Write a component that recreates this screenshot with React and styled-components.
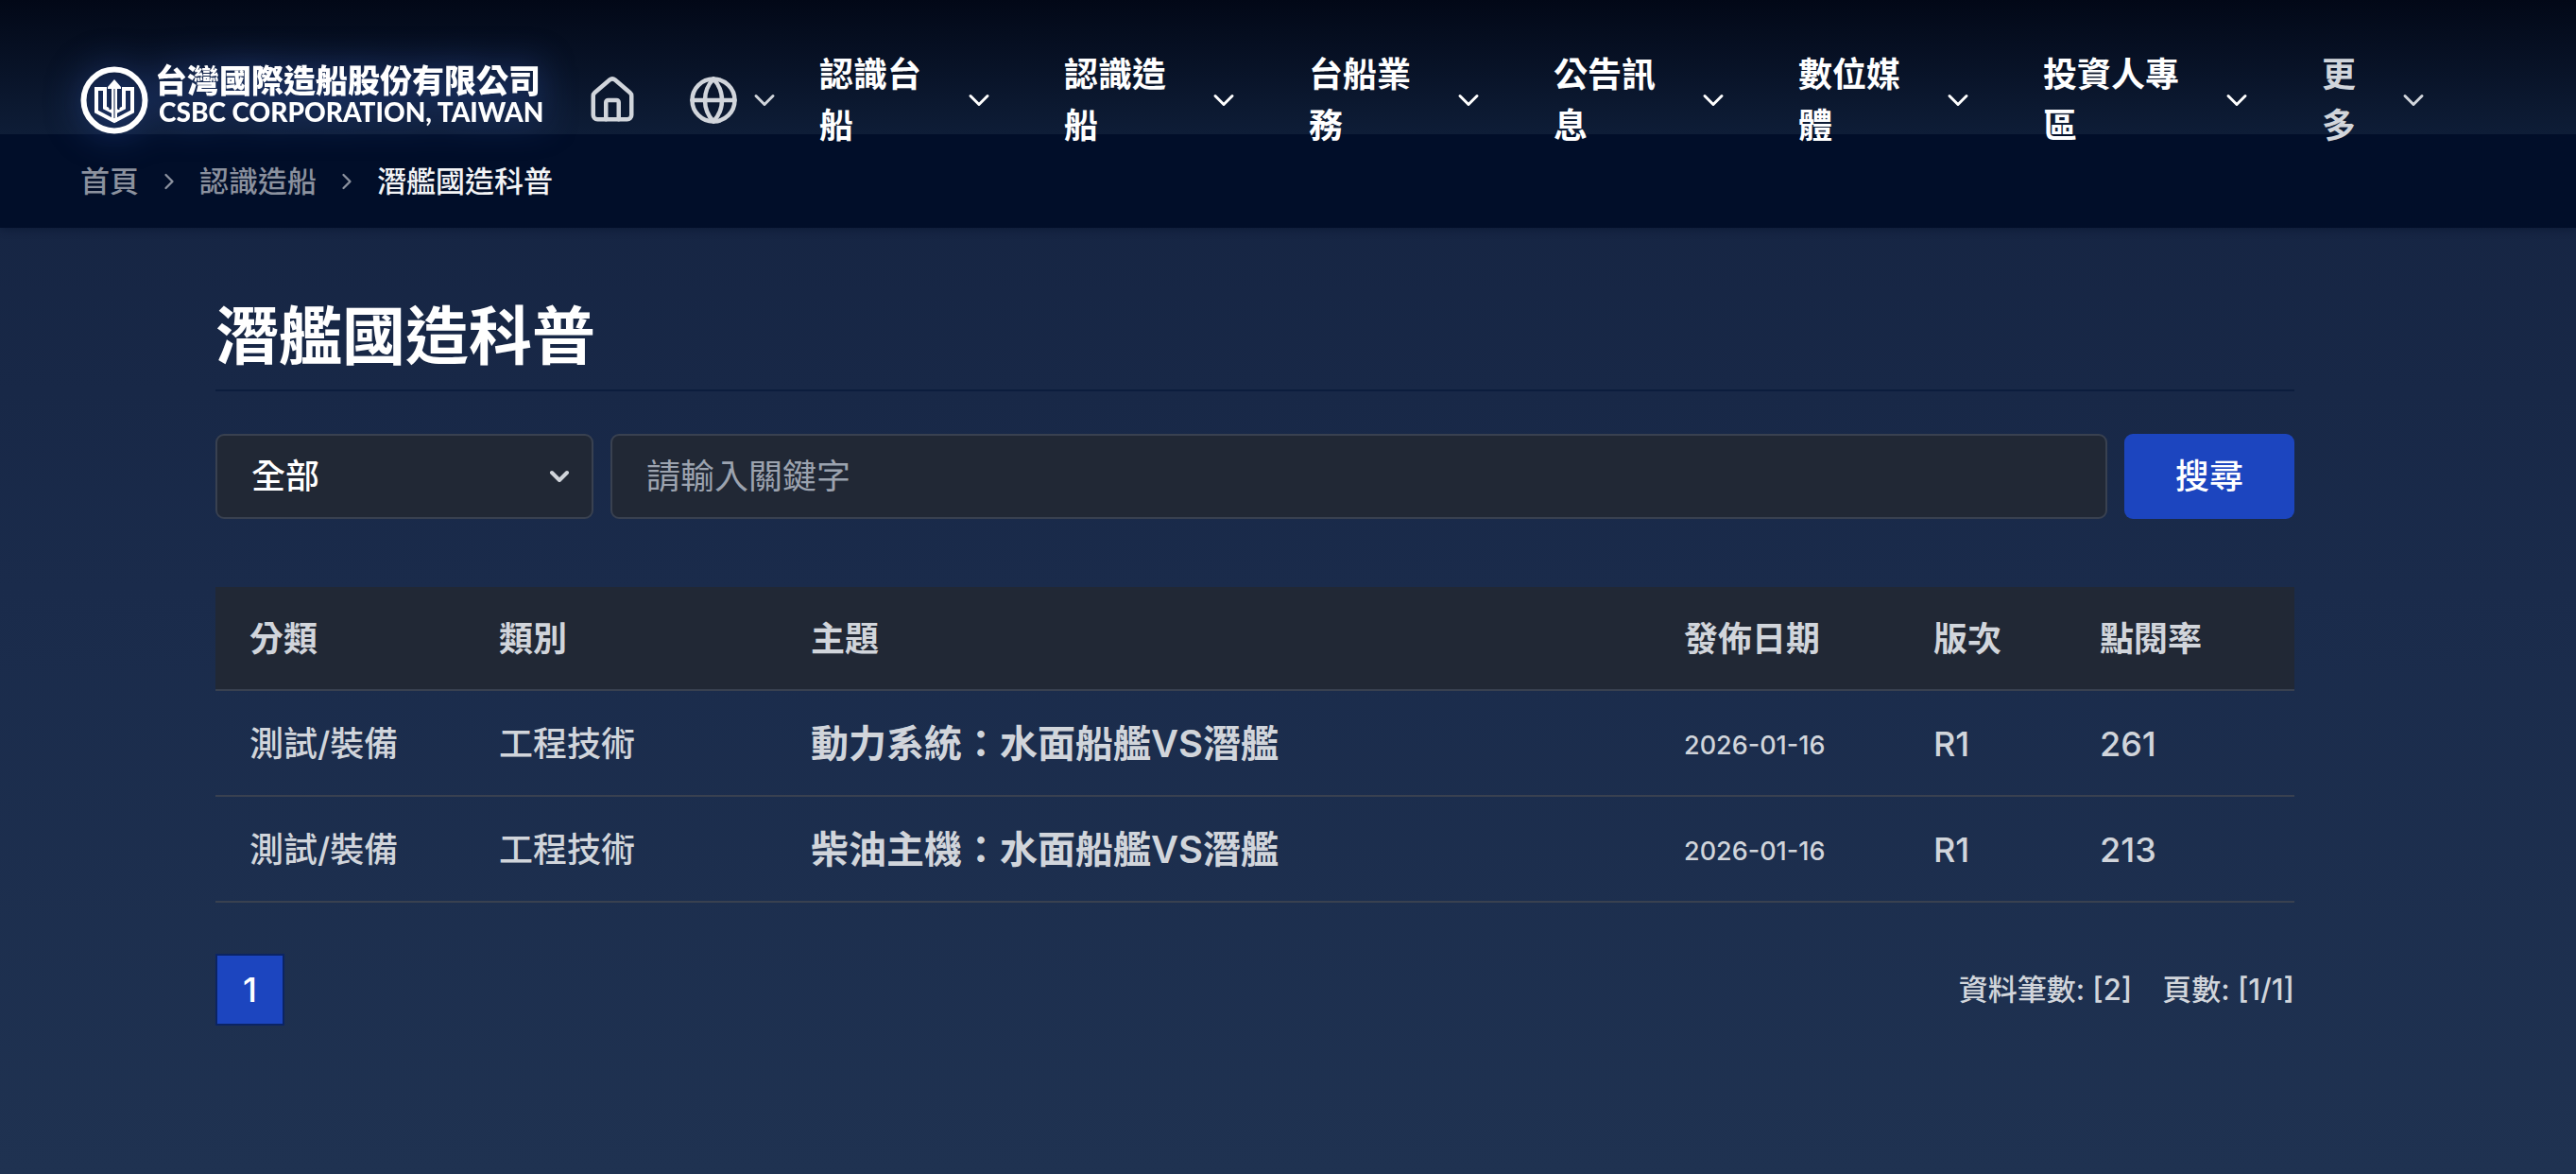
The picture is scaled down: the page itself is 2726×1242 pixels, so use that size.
import React, { useState } from "react";
import styled, { createGlobalStyle } from "styled-components";
import { ChevronDown, ChevronRight, Globe, House } from "lucide-react";

const menus = [
  { label: "認識台船", chars: 4 },
  { label: "認識造船", chars: 4 },
  { label: "台船業務", chars: 4 },
  { label: "公告訊息", chars: 4 },
  { label: "數位媒體", chars: 4 },
  { label: "投資人專區", chars: 5 },
  { label: "更多", chars: 2, muted: true },
];

const columns = [
  { title: "分類", width: "12%" },
  { title: "類別", width: "15%" },
  { title: "主題", width: "42%" },
  { title: "發佈日期", width: "12%" },
  { title: "版次", width: "8%" },
  { title: "點閱率", width: "11%" },
];

const articles = [
  {
    id: 1,
    group: "測試/裝備",
    kind: "工程技術",
    subject: "動力系統：水面船艦VS潛艦",
    date: "2026-01-16",
    edition: "R1",
    views: 261,
  },
  {
    id: 2,
    group: "測試/裝備",
    kind: "工程技術",
    subject: "柴油主機：水面船艦VS潛艦",
    date: "2026-01-16",
    edition: "R1",
    views: 213,
  },
];

const Logo = () => (
  <LogoLink href="#" aria-label="台灣國際造船股份有限公司">
    <svg width="72" height="72" viewBox="0 0 72 72" fill="none">
      <circle cx="36" cy="36" r="32.5" stroke="#fff" strokeWidth="6" />
      <path
        d="M17 24V48L36 58L55 48V24H46V44L36 49L26 44V24Z"
        stroke="#fff"
        strokeWidth="4"
      />
      <path d="M36 14L43 22V24H39V59H33V24H29V22Z" fill="#fff" />
      <path d="M31.500 25V46M40.500 25V46" stroke="#14264c" strokeWidth="2" />
      <path d="M36 24V55" stroke="#14264c" strokeWidth="1" />
    </svg>
    <LogoText>
      <LogoName>台灣國際造船股份有限公司</LogoName>
      <LogoEnglish>CSBC CORPORATION, TAIWAN</LogoEnglish>
    </LogoText>
  </LogoLink>
);

const App = () => {
  const [category, setCategory] = useState("all");
  const [keyword, setKeyword] = useState("");

  return (
    <>
      <GlobalStyle />
      <Header>
        <Logo />
        <Tools>
          <ToolButton aria-label="首頁">
            <House size={54} />
          </ToolButton>
          <ToolButton aria-label="語言">
            <Globe size={54} />
            <ChevronDown size={36} />
          </ToolButton>
        </Tools>
        <Nav>
          {menus.map((menu) => (
            <NavButton key={menu.label} $muted={menu.muted}>
              <NavLabel $chars={menu.chars}>{menu.label}</NavLabel>
              <ChevronDown size={36} />
            </NavButton>
          ))}
        </Nav>
      </Header>
      <Breadcrumb aria-label="breadcrumb">
        <a href="#">首頁</a>
        <ChevronRight size={28} />
        <a href="#">認識造船</a>
        <ChevronRight size={28} />
        <span>潛艦國造科普</span>
      </Breadcrumb>
      <Main>
        <Title>潛艦國造科普</Title>
        <SearchForm onSubmit={(e) => e.preventDefault()}>
          <SelectBox>
            <select
              aria-label="分類"
              value={category}
              onChange={(e) => setCategory(e.target.value)}
            >
              <option value="all">全部</option>
              <option value="test">測試/裝備</option>
            </select>
            <ChevronDown size={32} strokeWidth={3} />
          </SelectBox>
          <Keyword
            type="text"
            aria-label="關鍵字"
            placeholder="請輸入關鍵字"
            value={keyword}
            onChange={(e) => setKeyword(e.target.value)}
          />
          <SearchButton type="submit">搜尋</SearchButton>
        </SearchForm>
        <Table>
          <thead>
            <tr>
              {columns.map((column) => (
                <HeadCell key={column.title} $width={column.width}>
                  {column.title}
                </HeadCell>
              ))}
            </tr>
          </thead>
          <tbody>
            {articles.map((article) => (
              <tr key={article.id}>
                <Cell>{article.group}</Cell>
                <Cell>{article.kind}</Cell>
                <Cell>
                  <SubjectLink href="#">{article.subject}</SubjectLink>
                </Cell>
                <Cell>
                  <DateText>{article.date}</DateText>
                </Cell>
                <Cell>{article.edition}</Cell>
                <Cell>{article.views}</Cell>
              </tr>
            ))}
          </tbody>
        </Table>
        <Footer>
          <PageButton aria-current="page">1</PageButton>
          <Counts>
            <span>資料筆數: [2]</span>
            <span>頁數: [1/1]</span>
          </Counts>
        </Footer>
      </Main>
    </>
  );
};

const GlobalStyle = createGlobalStyle`
  * {
    box-sizing: border-box;
  }
  body {
    margin: 0;
    min-height: 100vh;
    background: linear-gradient(180deg, #14223f 0%, #1a2b4b 50%, #1f3251 100%);
    color: #d1d5db;
    font-family: Inter, "Noto Sans CJK TC", sans-serif;
    font-size: 36px;
    line-height: 54px;
  }
  a {
    color: inherit;
    text-decoration: none;
  }
  button, input, select {
    font: inherit;
    color: inherit;
  }
`;

const Header = styled.header`
  position: relative;
  z-index: 1;
  display: flex;
  align-items: center;
  height: 142px;
  padding: 70px 85px 0;
  background: linear-gradient(180deg, #020817 0%, #0e1d37 100%);
`;

const LogoLink = styled.a`
  display: flex;
  align-items: center;
  gap: 7px;
  width: 498px;
  flex-shrink: 0;
  color: #fff;
  filter: drop-shadow(0 0 18px rgba(59, 100, 200, 0.6));
`;

const LogoText = styled.span`
  display: flex;
  flex-direction: column;
  padding-bottom: 12px;
  white-space: nowrap;
`;

const LogoName = styled.span`
  font-size: 34px;
  font-weight: 900;
  line-height: 36px;
`;

const LogoEnglish = styled.span`
  padding-left: 4px;
  font-family: Lato, sans-serif;
  font-size: 28px;
  font-weight: 900;
  line-height: 28px;
`;

const Tools = styled.div`
  display: flex;
  align-items: center;
  gap: 53px;
  margin: 0 40px 0 38px;
`;

const ToolButton = styled.button`
  display: flex;
  align-items: center;
  gap: 9px;
  padding: 0;
  border: 0;
  background: none;
  color: #d1d5db;
`;

const Nav = styled.nav`
  display: flex;
  align-items: center;
  gap: 72px;
`;

const NavButton = styled.button`
  display: flex;
  align-items: center;
  gap: 9px;
  padding: 0;
  border: 0;
  background: none;
  color: ${(props) => (props.$muted ? "#d1d5db" : "white")};
  font-weight: 700;
  text-align: left;
  svg {
    flex-shrink: 0;
  }
`;

const NavLabel = styled.span`
  width: calc(${(props) => props.$chars}em - 2px);
`;

const Breadcrumb = styled.nav`
  display: flex;
  align-items: center;
  gap: 18px;
  height: 99px;
  padding: 0 85px;
  background: #010e29;
  box-shadow: 0 2px 8px rgba(1, 14, 41, 0.4);
  color: #8b919e;
  font-size: 31px;
  font-weight: 500;
  span {
    color: #f3f4f6;
  }
`;

const Main = styled.main`
  padding: 72px 298px 72px 228px;
`;

const Title = styled.h1`
  margin: 0 0 45px;
  padding: 2px 0 16px;
  border-bottom: 2px solid #0c1d3d;
  color: white;
  font-size: 67px;
  font-weight: 700;
  line-height: 81px;
`;

const SearchForm = styled.form`
  display: flex;
  gap: 18px;
  margin-bottom: 72px;
`;

const SelectBox = styled.div`
  display: grid;
  align-items: center;
  width: 400px;
  flex-shrink: 0;
  select {
    grid-area: 1 / 1;
    height: 90px;
    padding: 0 72px 0 36px;
    border: 2px solid #394150;
    border-radius: 9px;
    background: #212835;
    color: white;
    font-weight: 500;
    appearance: none;
  }
  svg {
    grid-area: 1 / 1;
    justify-self: end;
    margin-right: 20px;
    pointer-events: none;
  }
`;

const Keyword = styled.input`
  flex: 1;
  min-width: 0;
  height: 90px;
  padding: 0 36px;
  border: 2px solid #394150;
  border-radius: 9px;
  background: #212835;
  &::placeholder {
    color: #9ca3af;
    opacity: 1;
  }
`;

const SearchButton = styled.button`
  width: 180px;
  height: 90px;
  border: 0;
  border-radius: 9px;
  background: #1c45bf;
  color: white;
  font-weight: 500;
`;

const Table = styled.table`
  width: 100%;
  table-layout: fixed;
  border-collapse: separate;
  border-spacing: 0;
`;

const HeadCell = styled.th`
  width: ${(props) => props.$width};
  height: 110px;
  padding: 2px 36px 0;
  border-bottom: 2px solid #394150;
  background: #212835;
  font-weight: 600;
  text-align: left;
`;

const Cell = styled.td`
  height: 112px;
  padding: 2px 0 0 36px;
  border-bottom: 2px solid #394150;
  font-weight: 500;
  white-space: nowrap;
`;

const SubjectLink = styled.a`
  font-size: 40px;
  font-weight: 600;
`;

const DateText = styled.span`
  font-size: 27px;
`;

const Footer = styled.div`
  display: flex;
  justify-content: space-between;
  align-items: center;
  margin-top: 54px;
`;

const PageButton = styled.button`
  width: 73px;
  height: 76px;
  padding: 0;
  border: 2px solid #0b2463;
  background: #1c45bf;
  color: white;
  font-weight: 500;
`;

const Counts = styled.div`
  display: flex;
  gap: 32px;
  font-size: 31px;
  font-weight: 500;
`;

export default App;
